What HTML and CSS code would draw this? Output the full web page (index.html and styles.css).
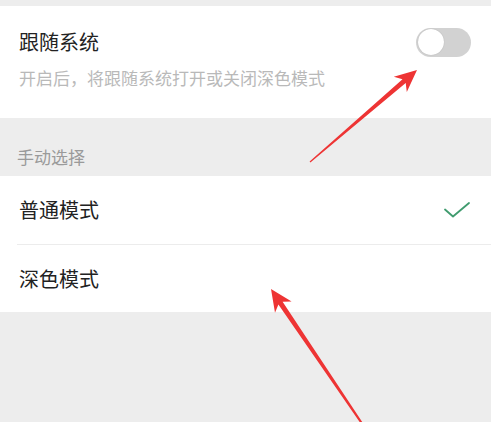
FILE: index.html
```html
<!DOCTYPE html>
<html lang="zh-CN">
<head>
    <meta charset="UTF-8">
    <meta name="viewport" content="width=device-width, initial-scale=1.0">
    <title>深色模式</title>
    <link rel="stylesheet" href="styles.css">
</head>
<body>
    <div class="page">
        <div class="top-gap"></div>

        <section class="card follow">
            <div class="follow-row">
                <span class="item-title">跟随系统</span>
                <span class="switch"><span class="knob"></span></span>
            </div>
            <p class="follow-desc">开启后，将跟随系统打开或关闭深色模式</p>
        </section>

        <div class="group-label">手动选择</div>

        <section class="card">
            <div class="option">
                <span class="item-title">普通模式</span>
                <svg class="check" width="26" height="16" viewBox="0 0 26 16">
                    <polyline points="1,7.5 9,14.5 25,1" fill="none" stroke="#3f9b6e" stroke-width="1.8" stroke-linecap="round" stroke-linejoin="round"/>
                </svg>
            </div>
            <div class="divider"></div>
            <div class="option option-last">
                <span class="item-title">深色模式</span>
            </div>
        </section>

        <svg class="arrows" width="491" height="422" viewBox="0 0 491 422">
            <polygon fill="#ee3434" points="417,70 406.8,91.9 405.7,83 310.4,162.5 309.6,161.5 402.5,79.2 393.8,76.7"/>
            <polygon fill="#ee3434" points="271,289 291.6,301.6 282.6,301.7 365.8,427.4 364.2,428.6 278.4,304.5 275,312.8"/>
        </svg>
    </div>
</body>
</html>
```

FILE: styles.css
```css
* {
    box-sizing: border-box;
    margin: 0;
    padding: 0;
}

body {
    background: #ededed;
    font-family: "Noto Sans CJK SC", "Noto Sans", sans-serif;
    color: #1f1f1f;
    width: 491px;
    height: 422px;
    overflow: hidden;
}

.page {
    position: relative;
    height: 422px;
}

.top-gap {
    height: 6px;
}

.card {
    background: #fff;
}

.follow {
    padding: 22px 20px 28px 19px;
}

.follow-row {
    display: flex;
    align-items: center;
    justify-content: space-between;
    height: 28px;
}

.item-title {
    font-size: 20px;
    line-height: 28px;
    color: #222;
}

.switch {
    width: 55px;
    height: 29px;
    border-radius: 15px;
    background: #d2d2d2;
    display: flex;
    align-items: center;
    padding: 0 2px;
}

.knob {
    width: 26px;
    height: 26px;
    border-radius: 50%;
    background: #fff;
    box-shadow: 0 0 1px rgba(0, 0, 0, 0.25);
}

.follow-desc {
    margin-top: 10px;
    font-size: 17px;
    line-height: 24px;
    color: #b9b9b9;
}

.group-label {
    padding: 27px 0 7px 17px;
    font-size: 17px;
    line-height: 24px;
    color: #9a9a9a;
}

.option {
    display: flex;
    align-items: center;
    justify-content: space-between;
    height: 68px;
    padding: 0 21px 0 19px;
}

.option-last {
    height: 67px;
}

.divider {
    height: 1px;
    margin-left: 17px;
    background: #ececec;
}

.arrows {
    position: absolute;
    left: 0;
    top: 0;
    pointer-events: none;
}
```
